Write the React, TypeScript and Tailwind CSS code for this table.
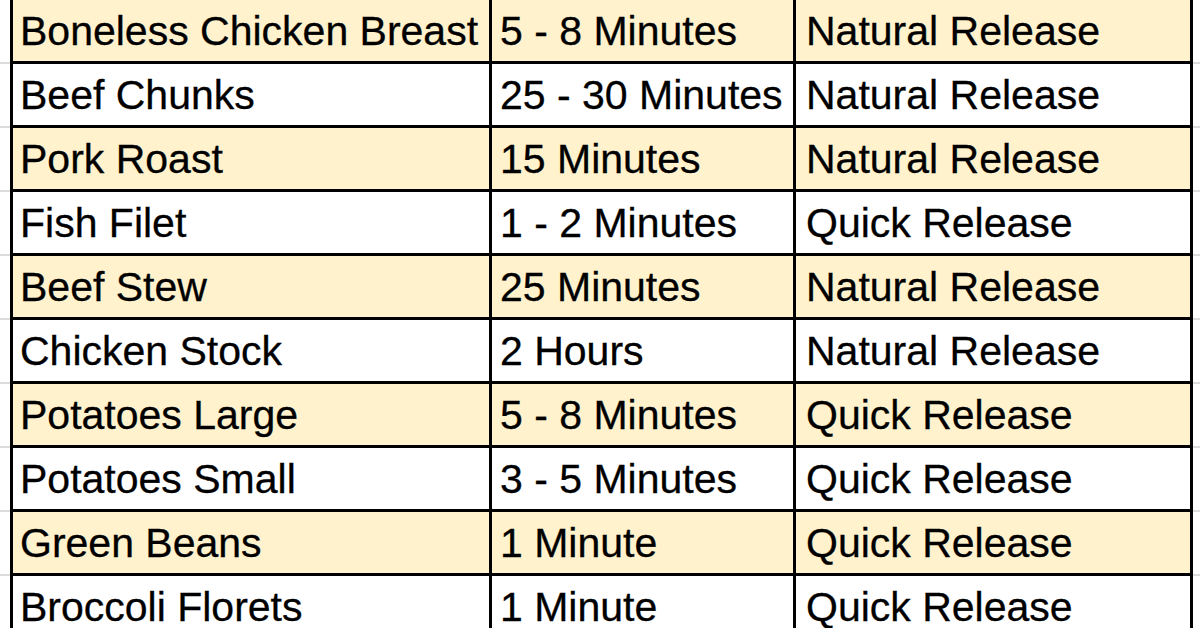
import React from "react";

const rows: [string, string, string][] = [
  ["Boneless Chicken Breast", "5 - 8 Minutes", "Natural Release"],
  ["Beef Chunks", "25 - 30 Minutes", "Natural Release"],
  ["Pork Roast", "15 Minutes", "Natural Release"],
  ["Fish Filet", "1 - 2 Minutes", "Quick Release"],
  ["Beef Stew", "25 Minutes", "Natural Release"],
  ["Chicken Stock", "2 Hours", "Natural Release"],
  ["Potatoes Large", "5 - 8 Minutes", "Quick Release"],
  ["Potatoes Small", "3 - 5 Minutes", "Quick Release"],
  ["Green Beans", "1 Minute", "Quick Release"],
  ["Broccoli Florets", "1 Minute", "Quick Release"],
];

export default function App() {
  return (
    <div
      className="w-[1200px] h-[628px] overflow-hidden bg-white text-black"
      style={{ fontFamily: '"Liberation Sans", Arial, sans-serif' }}
    >
      {rows.map((r, i) => {
        const bg = i % 2 === 0 ? "bg-[#fff2cc]" : "bg-white";
        return (
          <div key={i} className="flex h-[64px]">
            <div className="w-[10px] shrink-0 flex flex-col justify-end">
              <div className="h-[2px] bg-[#dcdcdc]" />
            </div>
            <div className={`flex shrink-0 border-l-[3px] border-b-[3px] border-black ${bg}`}>
              <div className="w-[479px] border-r-[3px] border-black pl-[7px] pt-[11px] text-[41px] leading-[40px] whitespace-nowrap overflow-hidden [-webkit-text-stroke:0.3px_black]">
                {r[0]}
              </div>
              <div className="w-[304px] border-r-[3px] border-black pl-[8px] pt-[11px] text-[41px] leading-[40px] whitespace-nowrap overflow-hidden [-webkit-text-stroke:0.3px_black]">
                {r[1]}
              </div>
              <div className="w-[397px] border-r-[3px] border-black pl-[10px] pt-[11px] text-[41px] leading-[40px] whitespace-nowrap overflow-hidden [-webkit-text-stroke:0.3px_black]">
                {r[2]}
              </div>
            </div>
            <div className="flex-1 flex flex-col justify-end">
              <div className="h-[2px] bg-[#dcdcdc]" />
            </div>
          </div>
        );
      })}
    </div>
  );
}
